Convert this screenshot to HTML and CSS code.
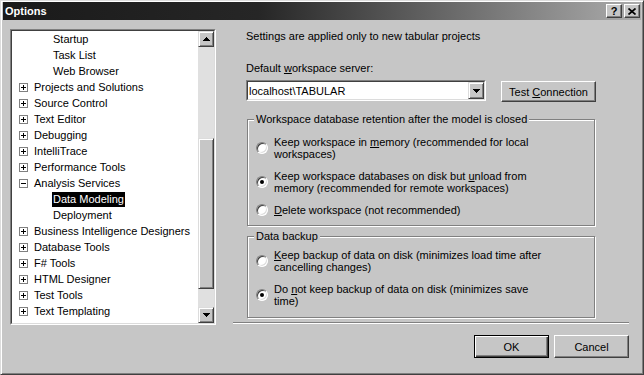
FILE: index.html
```html
<!DOCTYPE html>
<html lang="en">
<head>
    <meta charset="UTF-8">
    <title>Options</title>
    <link rel="stylesheet" href="styles.css">
</head>
<body>
    <div class="window">
        <div class="titlebar">
            <span class="title">Options</span>
            <div class="caption-buttons">
                <span class="cap-btn">?</span>
                <span class="cap-btn">
                    <svg width="8" height="7" viewBox="0 0 8 7"><path d="M0.5 0.5l7 6M7.5 0.5l-7 6" stroke="#000" stroke-width="1.7"/></svg>
                </span>
            </div>
        </div>

        <div class="dialog-body">
            <div class="tree">
                <div class="tree-inner">
                    <ul class="tree-list">
                        <li class="tree-item child"><span class="item-text">Startup</span></li>
                        <li class="tree-item child"><span class="item-text">Task List</span></li>
                        <li class="tree-item child"><span class="item-text">Web Browser</span></li>
                        <li class="tree-item"><span class="expander plus"></span><span class="item-text">Projects and Solutions</span></li>
                        <li class="tree-item"><span class="expander plus"></span><span class="item-text">Source Control</span></li>
                        <li class="tree-item"><span class="expander plus"></span><span class="item-text">Text Editor</span></li>
                        <li class="tree-item"><span class="expander plus"></span><span class="item-text">Debugging</span></li>
                        <li class="tree-item"><span class="expander plus"></span><span class="item-text">IntelliTrace</span></li>
                        <li class="tree-item"><span class="expander plus"></span><span class="item-text">Performance Tools</span></li>
                        <li class="tree-item"><span class="expander"></span><span class="item-text">Analysis Services</span></li>
                        <li class="tree-item child selected"><span class="item-text">Data Modeling</span></li>
                        <li class="tree-item child"><span class="item-text">Deployment</span></li>
                        <li class="tree-item"><span class="expander plus"></span><span class="item-text">Business Intelligence Designers</span></li>
                        <li class="tree-item"><span class="expander plus"></span><span class="item-text">Database Tools</span></li>
                        <li class="tree-item"><span class="expander plus"></span><span class="item-text">F# Tools</span></li>
                        <li class="tree-item"><span class="expander plus"></span><span class="item-text">HTML Designer</span></li>
                        <li class="tree-item"><span class="expander plus"></span><span class="item-text">Test Tools</span></li>
                        <li class="tree-item"><span class="expander plus"></span><span class="item-text">Text Templating</span></li>
                        <li class="tree-item"><span class="expander plus"></span><span class="item-text">Windows Forms Designer</span></li>
                    </ul>
                    <div class="scrollbar">
                        <div class="sb-btn">
                            <svg width="7" height="4" viewBox="0 0 7 4"><path d="M3 0h1v1h1v1h1v1h1v1H0V3h1V2h1V1h1z"/></svg>
                        </div>
                        <div class="sb-track">
                            <div class="sb-thumb"></div>
                        </div>
                        <div class="sb-btn">
                            <svg width="7" height="4" viewBox="0 0 7 4"><path d="M0 0h7v1H6v1H5v1H4v1H3V3H2V2H1V1H0z"/></svg>
                        </div>
                    </div>
                </div>
            </div>

            <div class="pane">
                <div class="settings">
                    <p class="intro">Settings are applied only to new tabular projects</p>
                    <div class="field-label">Default <u>w</u>orkspace server:</div>
                    <div class="server-row">
                        <div class="combo">
                            <div class="combo-inner">
                                <span class="combo-text">localhost\TABULAR</span>
                                <span class="combo-btn">
                                    <svg width="7" height="4" viewBox="0 0 7 4"><path d="M0 0h7v1H6v1H5v1H4v1H3V3H2V2H1V1H0z"/></svg>
                                </span>
                            </div>
                        </div>
                        <button class="btn btn-wide">Test <u>C</u>onnection</button>
                    </div>

                    <fieldset class="group group-retention">
                        <legend>Workspace database retention after the model is closed</legend>
                        <div class="option">
                            <span class="radio"></span>
                            <span class="option-text">Keep workspace in <u>m</u>emory (recommended for local workspaces)</span>
                        </div>
                        <div class="option">
                            <span class="radio checked"></span>
                            <span class="option-text">Keep workspace databases on disk but <u>u</u>nload from memory (recommended for remote workspaces)</span>
                        </div>
                        <div class="option">
                            <span class="radio"></span>
                            <span class="option-text"><u>D</u>elete workspace (not recommended)</span>
                        </div>
                    </fieldset>

                    <fieldset class="group group-backup">
                        <legend>Data backup</legend>
                        <div class="option">
                            <span class="radio"></span>
                            <span class="option-text"><u>K</u>eep backup of data on disk (minimizes load time after cancelling changes)</span>
                        </div>
                        <div class="option">
                            <span class="radio checked"></span>
                            <span class="option-text">Do <u>n</u>ot keep backup of data on disk (minimizes save time)</span>
                        </div>
                    </fieldset>
                </div>

                <div class="separator"></div>

                <div class="footer">
                    <button class="btn btn-default">OK</button>
                    <button class="btn">Cancel</button>
                </div>
            </div>
        </div>
    </div>
</body>
</html>
```

FILE: styles.css
```css
* {
    box-sizing: border-box;
}
body {
    margin: 0;
    font-family: "Liberation Sans", Arial, sans-serif;
    font-size: 11px;
    color: #000;
    background: #c6c6c6;
}
.window {
    width: 644px;
    height: 375px;
    background: #c6c6c6;
    border: 1px solid;
    border-color: #dcdcdc #404040 #404040 #dcdcdc;
    box-shadow: inset 1px 1px #fff, inset -1px -1px #808080;
    padding: 1px 2px 2px 2px;
}
.titlebar {
    height: 18px;
    display: flex;
    align-items: center;
    justify-content: space-between;
    padding: 0 1px 0 2px;
    background: linear-gradient(to right, #1a1a1a, #262626 40%, #acacac);
    color: #fff;
}
.title {
    font-weight: bold;
}
.caption-buttons {
    display: flex;
    gap: 2px;
}
.cap-btn {
    width: 16px;
    height: 14px;
    display: flex;
    align-items: center;
    justify-content: center;
    background: #c6c6c6;
    border: 1px solid;
    border-color: #fff #404040 #404040 #fff;
    box-shadow: inset -1px -1px #808080;
    color: #000;
    font-weight: bold;
    font-size: 11px;
    line-height: 12px;
}

.dialog-body {
    display: flex;
    gap: 17px;
    padding: 9px 12px 0 7px;
}

/* tree on the left */
.tree {
    width: 206px;
    height: 296px;
    border: 1px solid;
    border-color: #808080 #fff #fff #808080;
}
.tree-inner {
    height: 100%;
    display: flex;
    background: #fff;
    border: 1px solid;
    border-color: #404040 #dcdcdc #dcdcdc #404040;
}
.tree-list {
    flex: 1;
    margin: 0;
    padding: 0;
    list-style: none;
    overflow: hidden;
}
.tree-item {
    height: 16px;
    display: flex;
    align-items: center;
    padding-left: 7px;
    white-space: nowrap;
}
.tree-item.child {
    padding-left: 40px;
}
.item-text {
    height: 15px;
    line-height: 15px;
    padding: 0 1px;
}
.tree-item .expander + .item-text {
    margin-left: 5px;
}
.tree-item.selected .item-text {
    background: #000;
    color: #fff;
}
.expander {
    position: relative;
    width: 9px;
    height: 9px;
    flex: none;
    border: 1px solid #808080;
    background: #fff;
}
.expander::before {
    content: "";
    position: absolute;
    left: 1px;
    top: 3px;
    width: 5px;
    height: 1px;
    background: #000;
}
.expander.plus::after {
    content: "";
    position: absolute;
    left: 3px;
    top: 1px;
    width: 1px;
    height: 5px;
    background: #000;
}

.scrollbar {
    width: 16px;
    display: flex;
    flex-direction: column;
}
.sb-btn {
    width: 16px;
    height: 16px;
    display: flex;
    align-items: center;
    justify-content: center;
    background: #c6c6c6;
    border: 1px solid;
    border-color: #dcdcdc #404040 #404040 #dcdcdc;
    box-shadow: inset 1px 1px #fff, inset -1px -1px #808080;
}
.sb-track {
    flex: 1;
    background: #e0e0e0;
}
.sb-thumb {
    margin-top: 91px;
    height: 151px;
    background: #c6c6c6;
    border: 1px solid;
    border-color: #dcdcdc #404040 #404040 #dcdcdc;
    box-shadow: inset 1px 1px #fff, inset -1px -1px #808080;
}

/* right side */
.pane {
    width: 396px;
    display: flex;
    flex-direction: column;
}
.settings {
    padding-left: 13px;
    width: 363px;
}
.intro {
    margin: 1px 0 0;
    line-height: 13px;
}
.field-label {
    margin-top: 19px;
    line-height: 13px;
}
.server-row {
    display: flex;
    align-items: flex-start;
    gap: 15px;
    margin-top: 5px;
}
.combo {
    width: 240px;
    height: 21px;
    border: 1px solid;
    border-color: #808080 #fff #fff #808080;
}
.combo-inner {
    height: 100%;
    display: flex;
    align-items: center;
    background: #fff;
    border: 1px solid;
    border-color: #404040 #dcdcdc #dcdcdc #404040;
    padding-left: 1px;
}
.combo-text {
    flex: 1;
}
.combo-btn {
    width: 16px;
    height: 17px;
    display: flex;
    align-items: center;
    justify-content: center;
    background: #c6c6c6;
    border: 1px solid;
    border-color: #dcdcdc #404040 #404040 #dcdcdc;
    box-shadow: inset 1px 1px #fff, inset -1px -1px #808080;
}

.btn {
    font: inherit;
    color: #000;
    width: 75px;
    height: 23px;
    padding: 0;
    background: #c6c6c6;
    border: 1px solid;
    border-color: #fff #404040 #404040 #fff;
    box-shadow: inset -1px -1px #808080;
}
.btn-wide {
    width: 95px;
    height: 21px;
    margin-top: 1px;
}
.btn-default {
    border-color: #000;
    box-shadow: inset 1px 1px #fff, inset -1px -1px #404040, inset -2px -2px #808080;
}

.group {
    margin: 11px 0 0 1px;
    width: 348px;
    min-width: 0;
    padding: 10px 8px 9px 6px;
    border: 1px solid #808080;
    box-shadow: 1px 1px #fff, inset 1px 1px #fff;
}
.group-backup {
    margin-top: 4px;
    padding-top: 6px;
    padding-bottom: 10px;
}
.group legend {
    padding: 0 2px;
    line-height: 13px;
    background: #c6c6c6;
}
.option {
    display: flex;
    align-items: center;
    gap: 6px;
    margin-left: 2px;
}
.option + .option {
    margin-top: 10px;
}
.option-text {
    width: 272px;
    line-height: 12px;
}
.radio {
    width: 12px;
    height: 12px;
    flex: none;
    display: flex;
    align-items: center;
    justify-content: center;
    border-radius: 50%;
    background: #fff;
    border: 1px solid;
    border-color: #808080 #fff #fff #808080;
    box-shadow: inset 1px 1px #404040, inset -1px -1px #dcdcdc;
}
.radio.checked::after {
    content: "";
    width: 4px;
    height: 4px;
    border-radius: 50%;
    background: #000;
}

.separator {
    margin-top: 4px;
    height: 2px;
    border-top: 1px solid #808080;
    border-bottom: 1px solid #fff;
}
.footer {
    display: flex;
    justify-content: flex-end;
    gap: 5px;
    margin-top: 11px;
}
```
